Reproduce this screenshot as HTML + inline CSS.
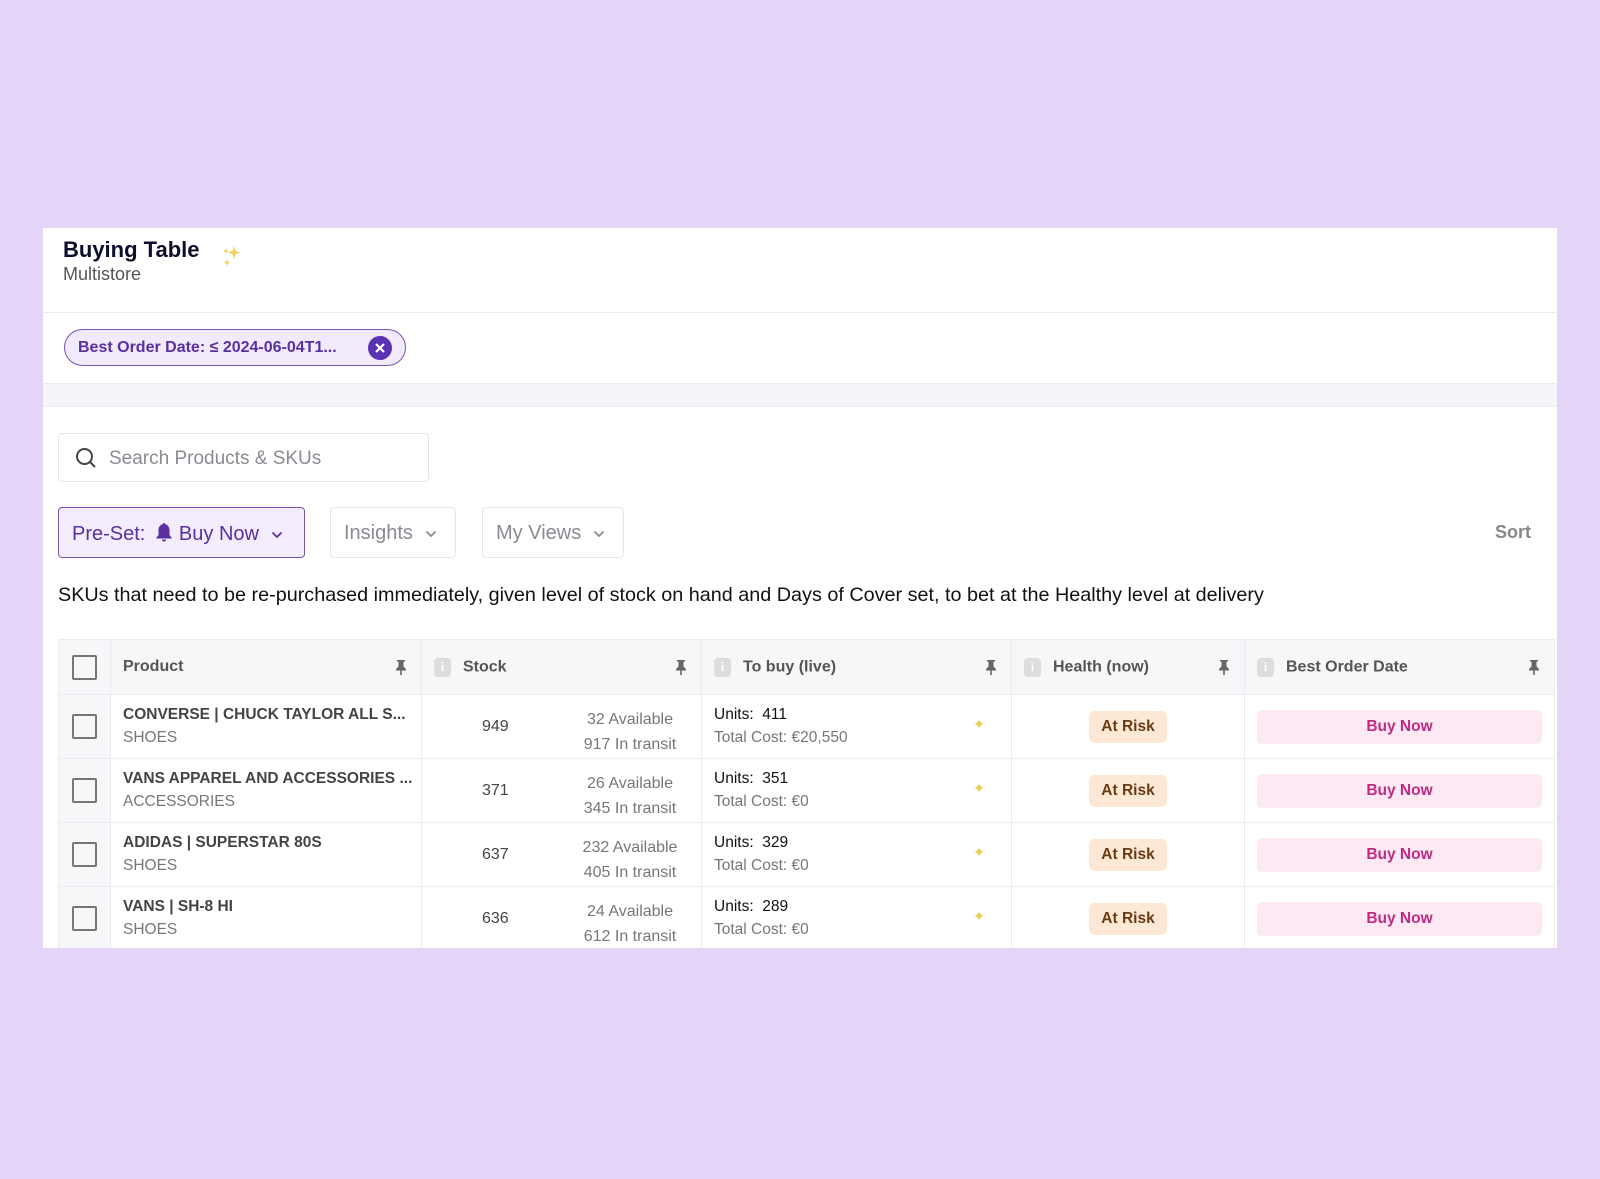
<!DOCTYPE html>
<html><head><meta charset="utf-8"><style>
*{box-sizing:border-box;margin:0;padding:0}
body{width:1600px;height:1179px;background:#e4d4f7;font-family:"Liberation Sans",sans-serif;position:relative;overflow:hidden}
.card{position:absolute;left:43px;top:228px;width:1514px;height:720px;background:#fff;overflow:hidden}
.abs{position:absolute}
.t1{left:20px;top:9px;font-size:22px;font-weight:bold;color:#0e0e2c}
.t2{left:20px;top:36px;font-size:18px;color:#555}
.hr{left:0;width:1514px;height:1px;background:#ececf0}
.chip{left:21px;top:101px;width:342px;height:37px;border:1.5px solid #7a52b8;border-radius:19px;background:#f1eafb;color:#5a2fa0;font-size:16px;font-weight:bold;padding:9px 0 0 13px}
.chip .x{position:absolute;right:13px;top:6px;width:24px;height:24px;border-radius:50%;background:#5b32b0}
.band{left:0;top:155px;width:1514px;height:24px;background:#f5f5f9;border-top:1px solid #ececf0;border-bottom:1px solid #ececf0}
.search{left:15px;top:205px;width:371px;height:49px;border:1px solid #e6e6ea;border-radius:4px;font-size:19px;color:#8a8a92;padding:14px 0 0 50px}
.btn{top:279px;height:51px;border:1px solid #e8e8ec;border-radius:4px;font-size:20px;color:#8a8a92;padding:14px 0 0 13px}
.btn svg{vertical-align:middle;margin-left:8px}
.pre{left:15px;width:247px;background:#f3ecfd;border:1.5px solid #7a52b8;color:#5a2fa0}
.desc{left:15px;top:356px;font-size:19.8px;color:#111}
table{position:absolute;left:15px;top:411px;border-collapse:collapse;table-layout:fixed}
td,th{border:1px solid #ececf0;height:64px;font-size:15.5px;position:relative}
th{height:55px;background:#f7f7f9;text-align:left;font-weight:bold;color:#555;padding-left:12px;font-size:16px}
.ck{width:25px;height:25px;border:2px solid #777;border-radius:2px;margin:auto}
.pin{position:absolute;right:14px;top:19px}
.i{display:inline-block;width:17px;height:19px;background:#ddd;border-radius:4px;color:#fff;font-size:12px;text-align:center;line-height:19px;margin-right:12px;vertical-align:middle}
.pn{font-weight:bold;color:#444;font-size:15.5px}
.sub{color:#777;margin-top:5px}
.risk{display:inline-block;background:#fde7d5;color:#6b3b14;font-weight:bold;border-radius:5px;padding:7px 12px}
.buy{margin:0 12px;height:34px;background:#fde9f3;color:#c02a82;font-weight:bold;border-radius:5px;text-align:center;line-height:34px}
.spk{position:absolute;right:26px;top:21px;color:#f0c94a;font-size:14px}
.av{position:absolute;left:148px;top:12px;width:120px;color:#777;text-align:center;line-height:25px;font-size:16px}
</style></head><body>
<svg width="0" height="0" style="position:absolute"><defs><symbol id="pin" viewBox="0 0 12 16"><path d="M2 1h8v1.5H8.5v5L11 10v1.5H6.8V16H5.2v-4.5H1V10l2.5-2.5v-5H2z" fill="#666"/></symbol><symbol id="chev" viewBox="0 0 12 8"><path d="M1.5 1.5L6 6l4.5-4.5" fill="none" stroke="currentColor" stroke-width="1.8"/></symbol></defs></svg>
<div class="card">
<div class="abs t1">Buying Table</div>
<div class="abs t2">Multistore</div>
<svg class="abs" style="left:178px;top:16px" width="22" height="24" viewBox="0 0 22 24"><path d="M13 2l1.5 5 5 1.5-5 1.5L13 15l-1.5-5-5-1.5 5-1.5z" fill="#f3cf5a"/><path d="M5 4l.8 2.2L8 7l-2.2.8L5 10l-.8-2.2L2 7l2.2-.8z" fill="#f3cf5a"/><path d="M6 15l.9 2.6 2.6.9-2.6.9L6 22l-.9-2.6-2.6-.9 2.6-.9z" fill="#f3cf5a"/></svg>
<div class="abs hr" style="top:84px"></div>
<div class="abs chip">Best Order Date: ≤ 2024-06-04T1...<div class="x"><svg width="24" height="24" viewBox="0 0 24 24"><path d="M8 8l8 8M16 8l-8 8" stroke="#fff" stroke-width="2.2"/></svg></div></div>
<div class="abs band"></div>
<div class="abs search"><svg class="abs" style="left:16px;top:13px" width="22" height="22" viewBox="0 0 22 22"><circle cx="9.5" cy="9.5" r="7.5" fill="none" stroke="#444" stroke-width="2"/><path d="M15 15l5 5" stroke="#444" stroke-width="2"/></svg>Search Products &amp; SKUs</div>
<div class="abs btn pre">Pre-Set: <svg width="18" height="20" viewBox="0 0 18 20" style="margin:0 6px 0 4px;vertical-align:-2px"><path d="M9 1c-.8 0-1.4.6-1.4 1.3C5 3 3.5 5.2 3.5 8v5L1.5 15.5v1h15v-1L14.5 13V8c0-2.8-1.5-5-4.1-5.7C10.4 1.6 9.8 1 9 1zM7 17.5a2 2 0 0 0 4 0z" fill="#5a2fa0"/></svg>Buy Now<svg width="12" height="8" style="color:#5a2fa0;margin-left:12px"><use href="#chev"/></svg></div>
<div class="abs btn" style="left:287px;width:126px">Insights<svg width="12" height="8" style="margin-left:12px"><use href="#chev"/></svg></div>
<div class="abs btn" style="left:439px;width:142px">My Views<svg width="12" height="8" style="margin-left:12px"><use href="#chev"/></svg></div>
<div class="abs" style="left:1452px;top:294px;font-size:18px;color:#888;font-weight:bold">Sort</div>
<div class="abs desc">SKUs that need to be re-purchased immediately, given level of stock on hand and Days of Cover set, to bet at the Healthy level at delivery</div>
<table>
<colgroup><col style="width:52px"><col style="width:311px"><col style="width:280px"><col style="width:310px"><col style="width:233px"><col style="width:310px"></colgroup>
<tr><th style="padding:0"><div class="ck"></div></th><th>Product<svg class="pin" width="12" height="16"><use href="#pin"/></svg></th><th><span class="i">i</span>Stock<svg class="pin" width="12" height="16"><use href="#pin"/></svg></th><th><span class="i">i</span>To buy (live)<svg class="pin" width="12" height="16"><use href="#pin"/></svg></th><th><span class="i">i</span>Health (now)<svg class="pin" width="12" height="16"><use href="#pin"/></svg></th><th><span class="i">i</span>Best Order Date<svg class="pin" width="12" height="16"><use href="#pin"/></svg></th></tr>
<tr><td style="background:#f7f7f9"><div class="ck"></div></td><td style="padding-left:12px"><div class="pn">CONVERSE | CHUCK TAYLOR ALL S...</div><div class="sub">SHOES</div></td><td><span class="abs" style="left:60px;top:23px;color:#444;font-size:16px">949</span><div class="av">32 Available<br>917 In transit</div></td><td style="padding-left:12px"><div style="color:#111">Units: &nbsp;411</div><div class="sub">Total Cost: €20,550</div><span class="spk">✦</span></td><td style="text-align:center"><span class="risk">At Risk</span></td><td><div class="buy">Buy Now</div></td></tr>
<tr><td style="background:#f7f7f9"><div class="ck"></div></td><td style="padding-left:12px"><div class="pn">VANS APPAREL AND ACCESSORIES ...</div><div class="sub">ACCESSORIES</div></td><td><span class="abs" style="left:60px;top:23px;color:#444;font-size:16px">371</span><div class="av">26 Available<br>345 In transit</div></td><td style="padding-left:12px"><div style="color:#111">Units: &nbsp;351</div><div class="sub">Total Cost: €0</div><span class="spk">✦</span></td><td style="text-align:center"><span class="risk">At Risk</span></td><td><div class="buy">Buy Now</div></td></tr>
<tr><td style="background:#f7f7f9"><div class="ck"></div></td><td style="padding-left:12px"><div class="pn">ADIDAS | SUPERSTAR 80S</div><div class="sub">SHOES</div></td><td><span class="abs" style="left:60px;top:23px;color:#444;font-size:16px">637</span><div class="av">232 Available<br>405 In transit</div></td><td style="padding-left:12px"><div style="color:#111">Units: &nbsp;329</div><div class="sub">Total Cost: €0</div><span class="spk">✦</span></td><td style="text-align:center"><span class="risk">At Risk</span></td><td><div class="buy">Buy Now</div></td></tr>
<tr><td style="background:#f7f7f9"><div class="ck"></div></td><td style="padding-left:12px"><div class="pn">VANS | SH-8 HI</div><div class="sub">SHOES</div></td><td><span class="abs" style="left:60px;top:23px;color:#444;font-size:16px">636</span><div class="av">24 Available<br>612 In transit</div></td><td style="padding-left:12px"><div style="color:#111">Units: &nbsp;289</div><div class="sub">Total Cost: €0</div><span class="spk">✦</span></td><td style="text-align:center"><span class="risk">At Risk</span></td><td><div class="buy">Buy Now</div></td></tr>
</table>
</div>
</body></html>
